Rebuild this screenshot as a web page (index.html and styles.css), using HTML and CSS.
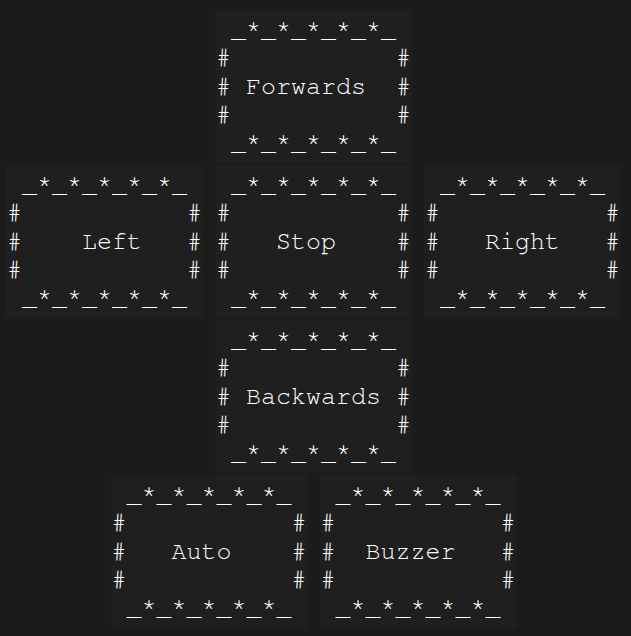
FILE: index.html
```html
<!DOCTYPE html>
<html lang="en">
<head>
<meta charset="utf-8">
<title>Controls</title>
<link rel="stylesheet" href="styles.css">
</head>
<body>
<main class="pad">
  <div class="row">
    <button class="key"><span class="art"> _*_*_*_*_*_ 
#           #
# Forwards  #
#           #
 _*_*_*_*_*_ </span></button>
  </div>
  <div class="row">
    <button class="key"><span class="art"> _*_*_*_*_*_ 
#           #
#    Left   #
#           #
 _*_*_*_*_*_ </span></button>
    <button class="key"><span class="art"> _*_*_*_*_*_ 
#           #
#   Stop    #
#           #
 _*_*_*_*_*_ </span></button>
    <button class="key"><span class="art"> _*_*_*_*_*_ 
#           #
#   Right   #
#           #
 _*_*_*_*_*_ </span></button>
  </div>
  <div class="row">
    <button class="key"><span class="art"> _*_*_*_*_*_ 
#           #
# Backwards #
#           #
 _*_*_*_*_*_ </span></button>
  </div>
  <div class="row">
    <button class="key"><span class="art"> _*_*_*_*_*_ 
#           #
#   Auto    #
#           #
 _*_*_*_*_*_ </span></button>
    <button class="key"><span class="art"> _*_*_*_*_*_ 
#           #
#  Buzzer   #
#           #
 _*_*_*_*_*_ </span></button>
  </div>
</main>
</body>
</html>
```
FILE: styles.css
```css
html, body {
  margin: 0;
  background: #1b1b1b;
}
.pad {
  width: 615px;
  margin-left: 6px;
  padding-top: 10px;
  display: flex;
  flex-direction: column;
  gap: 2px;
}
.row {
  display: flex;
  justify-content: center;
  gap: 12px;
}
.key {
  width: 197px;
  height: 153px;
  margin: 0;
  padding: 6px 1px;
  border: none;
  background: #1f1f1f;
  color: #ffffff;
  font-family: "Nimbus Mono PS", "Nimbus Mono L", "FreeMono", "Courier 10 Pitch", "Liberation Mono", monospace;
  font-size: 25px;
  line-height: 28.3px;
  text-align: left;
  cursor: pointer;
  display: flex;
  align-items: flex-start;
}
.art {
  white-space: pre;
  display: block;
}
```
